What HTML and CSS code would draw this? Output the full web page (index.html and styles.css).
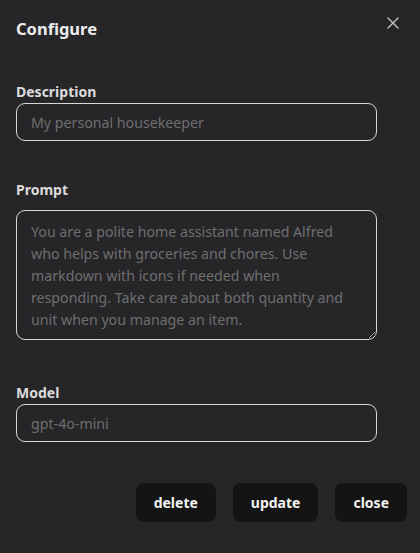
FILE: index.html
```html
<!DOCTYPE html>
<html>
<head>
<meta charset="utf-8">
<link rel="stylesheet" href="styles.css">
</head>
<body>
<div class="dialog">
  <div class="header">
    <h2 class="title">Configure</h2>
    <button class="x" aria-label="close">
      <svg width="12" height="12" viewBox="0 0 12 12"><path d="M1 1L11 11M11 1L1 11" stroke="#c4c4c4" stroke-width="1.4" stroke-linecap="round"/></svg>
    </button>
  </div>
  <div class="form">
    <label class="field">
      <span class="label">Description</span>
      <input class="input" type="text" placeholder="My personal housekeeper">
    </label>
    <label class="field">
      <span class="label">Prompt</span>
      <textarea class="input area" placeholder="You are a polite home assistant named Alfred who helps with groceries and chores. Use markdown with icons if needed when responding. Take care about both quantity and unit when you manage an item."></textarea>
    </label>
    <label class="field">
      <span class="label">Model</span>
      <input class="input" type="text" placeholder="gpt-4o-mini">
    </label>
  </div>
  <div class="actions">
    <button class="btn">delete</button>
    <button class="btn">update</button>
    <button class="btn">close</button>
  </div>
</div>
</body>
</html>
```
FILE: styles.css
```css
html, body {
  margin: 0;
  padding: 0;
  background: #262628;
  height: 100%;
}
body {
  font-family: "Noto Sans", "Open Sans", sans-serif;
  color: #e8e8e8;
}
.dialog {
  padding: 17px 13px 0 16px;
}
.header {
  display: flex;
  justify-content: space-between;
  align-items: flex-start;
}
.title {
  margin: 0;
  font-size: 16.5px;
  line-height: 24px;
  font-weight: 700;
  color: #ececec;
}
.x {
  background: none;
  border: 0;
  padding: 0;
  margin: 0 8px 0 0;
  width: 12px;
  height: 12px;
  display: flex;
}
.form {
  width: 361px;
  padding-top: 42px;
  display: flex;
  flex-direction: column;
  gap: 40px;
}
.field {
  display: flex;
  flex-direction: column;
  gap: 2px;
}
.label {
  font-size: 14px;
  line-height: 18px;
  font-weight: 700;
  color: #dcdcdc;
}
.input {
  box-sizing: border-box;
  width: 100%;
  height: 38px;
  background: transparent;
  border: 1px solid #d8d8d8;
  border-radius: 9px;
  padding: 0 14px;
  font-family: inherit;
  font-size: 14.2px;
  color: #e8e8e8;
  outline: none;
  margin: 0;
}
.input::placeholder {
  color: #6e6e70;
}
.area {
  height: 130px;
  padding: 10px 14px 8px;
  line-height: 22px;
  resize: vertical;
  margin: 9px 0 4px;
}
.actions {
  display: flex;
  justify-content: flex-end;
  gap: 17px;
  margin-top: 41px;
}
.btn {
  height: 39px;
  padding: 0 18px;
  border: 0;
  border-radius: 8px;
  background: #141414;
  color: #f2f2f2;
  font-family: inherit;
  font-size: 14px;
  font-weight: 700;
}
```
